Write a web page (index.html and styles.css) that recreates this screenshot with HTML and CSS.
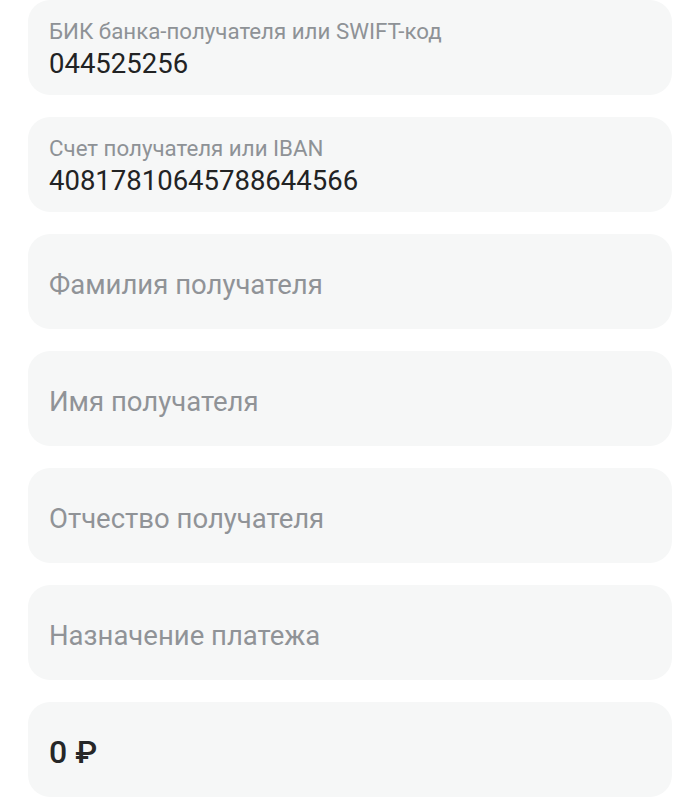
FILE: index.html
```html
<!DOCTYPE html>
<html lang="ru">
<head>
    <meta charset="UTF-8">
    <meta name="viewport" content="width=device-width, initial-scale=1.0">
    <title>Перевод по реквизитам</title>
    <link rel="stylesheet" href="styles.css">
</head>
<body>

<div class="formulario">
    <!-- Поля с заполненными значениями -->
    <div class="campo campo-lleno">
        <div class="etiqueta">БИК банка-получателя или SWIFT-код</div>
        <div class="valor">044525256</div>
    </div>

    <div class="campo campo-lleno">
        <div class="etiqueta">Счет получателя или IBAN</div>
        <div class="valor">40817810645788644566</div>
    </div>

    <!-- Пустые поля -->
    <div class="campo">
        <div class="placeholder">Фамилия получателя</div>
    </div>

    <div class="campo">
        <div class="placeholder">Имя получателя</div>
    </div>

    <div class="campo">
        <div class="placeholder">Отчество получателя</div>
    </div>

    <div class="campo">
        <div class="placeholder">Назначение платежа</div>
    </div>

    <!-- Сумма -->
    <div class="campo">
        <div class="suma">0 ₽</div>
    </div>
</div>

</body>
</html>
```

FILE: styles.css
```css
body {
    margin: 0;
    padding: 0;
    background-color: #ffffff;
    font-family: Roboto, "Noto Sans", Arial, sans-serif;
}

/* Contenedor principal */
.formulario {
    display: flex;
    flex-direction: column;
    gap: 22px;
    padding: 0 28px;
}

/* Campo */
.campo {
    height: 95px;
    box-sizing: border-box;
    padding: 5px 21px 0;
    background-color: #f6f7f7;
    border-radius: 22px;
    display: flex;
    flex-direction: column;
    justify-content: center;
}

.campo-lleno {
    justify-content: flex-start;
    padding-top: 18px;
}

.etiqueta {
    font-size: 22.3px;
    line-height: 26px;
    color: #8e9296;
}

.valor {
    margin-top: 4px;
    font-size: 27.5px;
    line-height: 32px;
    color: #222324;
}

.placeholder {
    font-size: 27.5px;
    color: #909397;
}

.suma {
    font-size: 32px;
    font-weight: 500;
    color: #262728;
}
```
